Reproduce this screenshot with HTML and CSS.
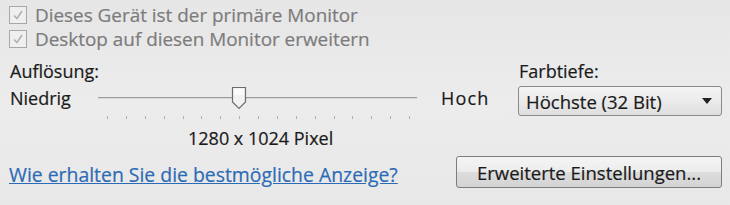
FILE: index.html
```html
<!DOCTYPE html>
<html lang="de">
<head>
<meta charset="utf-8">
<link rel="stylesheet" href="styles.css">
</head>
<body>
<div class="page">
  <div class="checks">
    <div class="check">
      <span class="box"><svg width="14" height="14" viewBox="0 0 14 14"><path d="M3 7.5 L6 10.5 L11 3" fill="none" stroke="#a9b3bd" stroke-width="1.6"/></svg></span>
      <span class="clabel">Dieses Gerät ist der primäre Monitor</span>
    </div>
    <div class="check">
      <span class="box"><svg width="14" height="14" viewBox="0 0 14 14"><path d="M3 7.5 L6 10.5 L11 3" fill="none" stroke="#a9b3bd" stroke-width="1.6"/></svg></span>
      <span class="clabel">Desktop auf diesen Monitor erweitern</span>
    </div>
  </div>
  <div class="settings">
    <div class="res">
      <div class="label">Auflösung:</div>
      <div class="slider-row">
        <span class="end low">Niedrig</span>
        <div class="slider">
          <div class="track"></div>
          <svg class="thumb" width="18" height="24" viewBox="0 0 18 24"><path d="M2.5 1.5 H15.5 V16 L9 22.5 L2.5 16 Z" fill="#f2f2f2" stroke="#6d6d6d" stroke-width="1.2"/><path d="M4 3 H14 V9 H4 Z" fill="#fbfbfb"/></svg>
          <div class="ticks">
            <i></i><i></i><i></i><i></i><i></i><i></i><i></i><i></i><i></i><i></i><i></i><i></i><i></i><i></i><i></i><i></i><i></i>
          </div>
        </div>
        <span class="end high">Hoch</span>
      </div>
      <div class="pixels">1280 x 1024 Pixel</div>
    </div>
    <div class="depth">
      <div class="label">Farbtiefe:</div>
      <div class="select">
        <span>Höchste (32 Bit)</span>
        <svg width="10" height="6" viewBox="0 0 10 6"><path d="M0 0 H10 L5 6 Z" fill="#222"/></svg>
      </div>
    </div>
  </div>
  <div class="bottom">
    <a class="link" href="#">Wie erhalten Sie die bestmögliche Anzeige?</a>
    <button class="btn">Erweiterte Einstellungen...</button>
  </div>
</div>
</body>
</html>
```

FILE: styles.css
```css
html, body {
  margin: 0;
  padding: 0;
}
body {
  background: linear-gradient(180deg, #e6e6e6 0%, #ececec 50%, #e8e8e8 100%);
  font-family: "Open Sans", "Noto Sans", "DejaVu Sans", sans-serif;
  font-size: 18px;
  font-weight: 500;
  color: #1a1a1a;
  -webkit-text-stroke: 0.2px currentColor;
  width: 730px;
  height: 205px;
  overflow: hidden;
}
.page {
  padding: 3px 8px 0 9px;
}
.checks {
  display: flex;
  flex-direction: column;
}
.check {
  display: flex;
  align-items: center;
  height: 24px;
  gap: 8px;
}
.box {
  width: 18px;
  height: 18px;
  border: 1px solid #a8a8a8;
  background: #efefef;
  display: flex;
  align-items: center;
  justify-content: center;
  box-sizing: border-box;
}
.clabel {
  color: #7c7c7c;
  font-size: 18.9px;
}
.settings {
  display: flex;
  margin-top: 9px;
}
.res {
  width: 509px;
}
.label {
  height: 22px;
  line-height: 22px;
  padding-left: 1px;
}
.slider-row {
  display: flex;
  align-items: flex-start;
  margin-top: 4px;
}
.end {
  height: 24px;
  line-height: 24px;
}
.low {
  width: 89px;
  padding-left: 1px;
  box-sizing: border-box;
}
.high {
  margin-left: 24px;
  letter-spacing: 1.2px;
}
.slider {
  position: relative;
  width: 319px;
  height: 36px;
}
.track {
  margin-top: 11px;
  height: 1px;
  background: #9c9c9c;
  border-bottom: 1px solid #d8d8d8;
}
.thumb {
  position: absolute;
  left: 132px;
  top: 0;
}
.ticks {
  display: flex;
  justify-content: space-between;
  margin: 17px 7px 0 9px;
}
.ticks i {
  display: block;
  width: 1px;
  height: 3px;
  background: #b0b0b0;
}
.pixels {
  margin-top: 4px;
  padding-left: 179px;
  height: 24px;
  line-height: 24px;
}
.depth {
  display: flex;
  flex-direction: column;
}
.select {
  margin-top: 4px;
  width: 204px;
  height: 30px;
  box-sizing: border-box;
  border: 1px solid #8a8a8a;
  border-radius: 3px;
  background: linear-gradient(180deg, #f4f4f4 0%, #ebebeb 50%, #dedede 100%);
  display: flex;
  align-items: center;
  justify-content: space-between;
  padding: 0 9px 0 7px;
  font-size: 18.5px;
}
.bottom {
  display: flex;
  justify-content: space-between;
  align-items: center;
  margin-top: 6px;
}
.link {
  color: #2c6bb5;
  text-decoration: underline;
  font-size: 19.4px;
  margin-top: 4px;
}
.btn {
  width: 266px;
  height: 32px;
  border: 1px solid #7d7d7d;
  border-radius: 3px;
  background: linear-gradient(180deg, #f5f5f5 0%, #ececec 48%, #dcdcdc 52%, #d4d4d4 100%);
  font-family: inherit;
  font-size: 18.5px;
  font-weight: 500;
  color: #1a1a1a;
  -webkit-text-stroke: 0.2px currentColor;
  padding: 0;
}
```
